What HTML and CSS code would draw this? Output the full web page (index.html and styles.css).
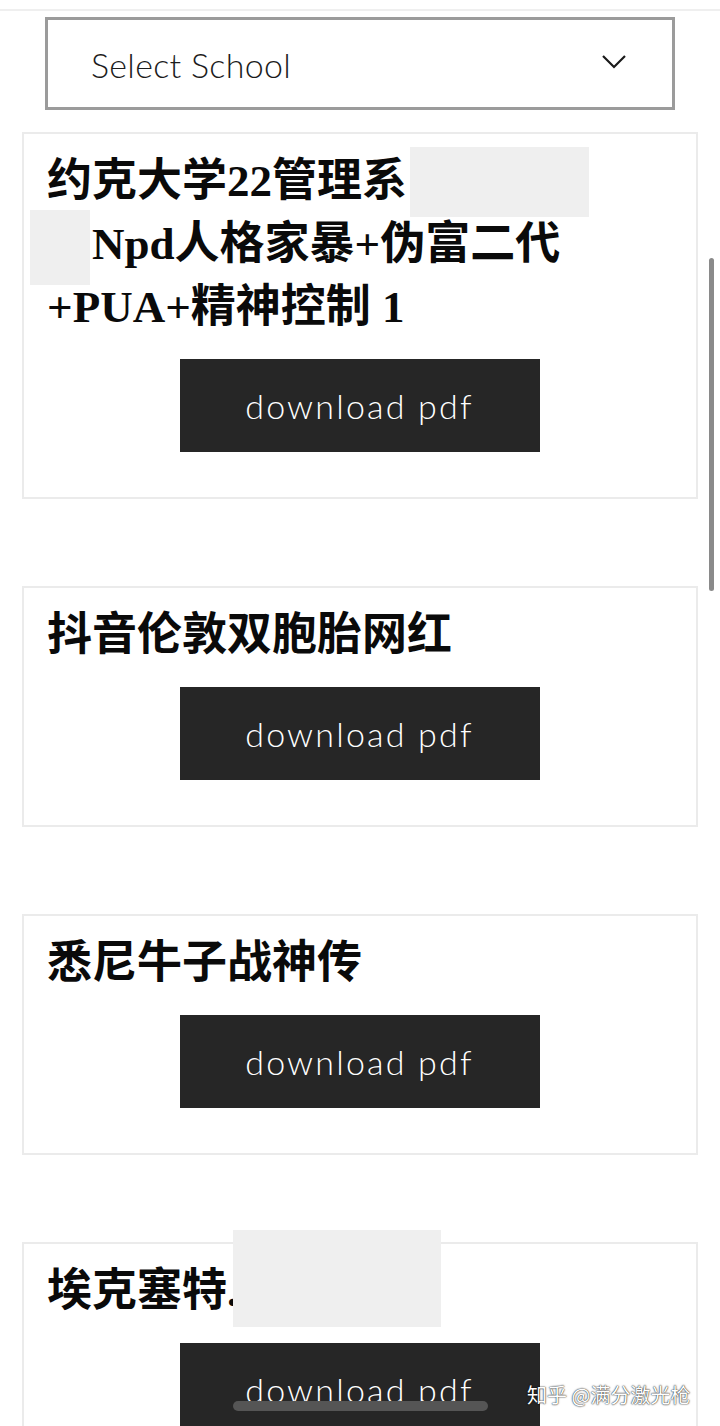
FILE: index.html
```html
<!DOCTYPE html>
<html lang="zh">
<head>
<meta charset="utf-8">
<title>Select School</title>
<link rel="stylesheet" href="styles.css">
</head>
<body>
<div class="topbar"></div>
<main class="page">
  <div class="select">
    <span class="select-label">Select School</span>
    <svg class="chevron" width="26" height="16" viewBox="0 0 26 16"><polyline points="2,3 13,14 24,3" fill="none" stroke="#1a1a1a" stroke-width="2.2" stroke-linejoin="miter"/></svg>
  </div>

  <section class="card">
    <h2 class="title">约克大学22管理系<br><span class="gap"></span>Npd人格家暴+伪富二代<br>+PUA+精神控制 1</h2>
    <a class="btn">download pdf</a>
    <span class="redact r1"></span>
    <span class="redact r2"></span>
  </section>

  <section class="card">
    <h2 class="title">抖音伦敦双胞胎网红</h2>
    <a class="btn">download pdf</a>
  </section>

  <section class="card">
    <h2 class="title">悉尼牛子战神传</h2>
    <a class="btn">download pdf</a>
  </section>

  <section class="card">
    <h2 class="title">埃克塞特.</h2>
    <a class="btn">download pdf</a>
    <span class="redact r3"></span>
  </section>
</main>
<div class="scrollbar"></div>
<div class="home-indicator"></div>
<div class="watermark">知乎 @满分激光枪</div>
</body>
</html>
```
FILE: styles.css
```css
html, body {
  margin: 0;
  padding: 0;
  background: #ffffff;
  overflow: hidden;
}
body {
  width: 720px;
  height: 1426px;
  position: relative;
  font-family: "Liberation Serif", "Noto Sans CJK SC", serif;
}
.topbar {
  height: 9px;
  border-bottom: 2px solid #efefef;
}
.page {
  padding: 6px 22px 0 22px;
  display: flex;
  flex-direction: column;
}
.select {
  margin: 0 23px 22px 23px;
  height: 87px;
  border: 3px solid #9b9b9b;
  display: flex;
  align-items: center;
  justify-content: space-between;
  padding: 0 45px 0 43px;
}
.select-label {
  font-family: "Lato", "Noto Sans", sans-serif;
  font-weight: 300;
  font-size: 34px;
  color: #1c1c1c;
  letter-spacing: 0.3px;
  padding-top: 2px;
}
.chevron {
  display: block;
  margin-top: -6px;
}
.card {
  position: relative;
  border: 2px solid #ebebeb;
  padding: 16px 24px 45px 23px;
  margin-bottom: 87px;
  display: flex;
  flex-direction: column;
  align-items: flex-start;
}
.title {
  margin: 0;
  font-family: "Liberation Serif", "Noto Sans CJK SC", serif;
  font-weight: 700;
  font-size: 45px;
  line-height: 63px;
  color: #0a0a0a;
}
.gap {
  display: inline-block;
  width: 45px;
}
.btn {
  align-self: center;
  margin-top: 20px;
  width: 360px;
  height: 93px;
  background: #262626;
  color: #ffffff;
  display: flex;
  align-items: center;
  justify-content: center;
  font-family: "Lato", "Noto Sans", sans-serif;
  font-weight: 300;
  font-size: 34px;
  letter-spacing: 2.2px;
  text-decoration: none;
}
.redact {
  position: absolute;
  background: #efefef;
}
.r1 { left: 386px; top: 13px; width: 179px; height: 70px; }
.r2 { left: 6px; top: 76px; width: 60px; height: 75px; }
.r3 { left: 209px; top: -14px; width: 208px; height: 97px; }
.scrollbar {
  position: absolute;
  left: 709px;
  top: 258px;
  width: 5px;
  height: 333px;
  border-radius: 3px;
  background: #8a8a8a;
}
.home-indicator {
  position: absolute;
  left: 233px;
  top: 1401px;
  width: 255px;
  height: 10px;
  border-radius: 5px;
  background: #555555;
}
.watermark {
  position: absolute;
  left: 527px;
  top: 1381px;
  font-family: "Noto Sans CJK SC", sans-serif;
  font-size: 20px;
  line-height: 28px;
  color: #ffffff;
  text-shadow: 0 0 2px rgba(0,0,0,0.7), 0 0 1px rgba(0,0,0,0.9);
  white-space: nowrap;
}
```
